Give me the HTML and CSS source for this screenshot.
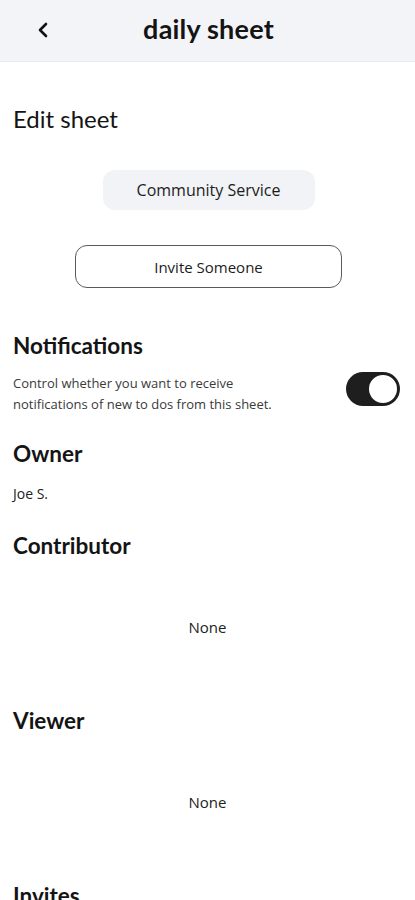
FILE: index.html
```html
<!DOCTYPE html>
<html lang="en">
<head>
    <meta charset="UTF-8">
    <meta name="viewport" content="width=device-width, initial-scale=1.0">
    <title>daily sheet</title>
    <link rel="stylesheet" href="styles.css">
</head>
<body>
    <header class="topbar">
        <button class="back" aria-label="Back">
            <svg width="14" height="16" viewBox="0 0 14 16"><path d="M10 2 L4 8 L10 14" fill="none" stroke="#111" stroke-width="2.6" stroke-linecap="round" stroke-linejoin="round"/></svg>
        </button>
        <h1>daily sheet</h1>
    </header>

    <main class="content">
        <h2 class="page-title">Edit sheet</h2>

        <div class="pill-row">
            <span class="pill">Community Service</span>
        </div>

        <div class="invite-row">
            <button class="invite">Invite Someone</button>
        </div>

        <section class="section">
            <h3>Notifications</h3>
            <div class="notify-row">
                <p class="hint">Control whether you want to receive notifications of new to dos from this sheet.</p>
                <label class="toggle">
                    <input type="checkbox" checked>
                    <span class="track"><span class="knob"></span></span>
                </label>
            </div>
        </section>

        <section class="section owner">
            <h3>Owner</h3>
            <p class="person">Joe S.</p>
        </section>

        <section class="section list">
            <h3>Contributor</h3>
            <div class="empty">None</div>
        </section>

        <section class="section list">
            <h3>Viewer</h3>
            <div class="empty">None</div>
        </section>

        <section class="section list">
            <h3>Invites</h3>
            <div class="empty">None</div>
        </section>
    </main>
</body>
</html>
```

FILE: styles.css
```css
:root {
    --ink: #141414;
    --muted: #3a3a3a;
    --bar: #f3f4f8;
}

* {
    box-sizing: border-box;
}

body {
    margin: 0;
    font-family: 'Open Sans', 'Noto Sans', sans-serif;
    color: var(--ink);
    background: #fff;
}

.topbar {
    height: 62px;
    background: var(--bar);
    border-bottom: 1px solid #e7e9ee;
    display: flex;
    align-items: center;
    justify-content: center;
    position: relative;
}

.back {
    position: absolute;
    left: 34px;
    top: 20px;
    background: none;
    border: none;
    padding: 2px;
    cursor: pointer;
}

.topbar h1 {
    margin: 0 0 4px;
    padding-left: 2px;
    font-family: 'Lato', sans-serif;
    font-size: 27px;
    font-weight: 700;
    letter-spacing: 0.2px;
}

.content {
    padding: 0 13px;
}

.page-title {
    margin: 43px 0 0;
    font-family: 'Lato', sans-serif;
    font-size: 24px;
    font-weight: 400;
    line-height: 28px;
}

.pill-row,
.invite-row {
    display: flex;
    justify-content: center;
}

.pill-row {
    margin-top: 37px;
    padding-left: 2px;
}

.pill {
    width: 212px;
    height: 40px;
    display: flex;
    align-items: center;
    justify-content: center;
    background: #f1f3f6;
    border-radius: 12px;
    font-size: 16px;
    color: #1c1c1c;
}

.invite-row {
    margin-top: 35px;
    padding-left: 2px;
}

.invite {
    width: 267px;
    height: 43px;
    background: #fff;
    border: 1.5px solid #5a5a5a;
    border-radius: 12px;
    font-family: 'Open Sans', sans-serif;
    font-size: 15px;
    color: #1c1c1c;
    cursor: pointer;
}

.section h3 {
    margin: 0;
    font-family: 'Lato', sans-serif;
    font-size: 22.5px;
    font-weight: 700;
    line-height: 26px;
}

.section:first-of-type {
    margin-top: 45px;
}

.notify-row {
    display: flex;
    align-items: flex-start;
    justify-content: space-between;
    margin-top: 14px;
}

.hint {
    margin: 0;
    max-width: 300px;
    padding-right: 30px;
    font-size: 13px;
    line-height: 21px;
    color: var(--muted);
}

.toggle {
    margin: -1px 2px 0 0;
    cursor: pointer;
}

.toggle input {
    display: none;
}

.track {
    display: block;
    width: 54px;
    height: 34px;
    border-radius: 17px;
    background: #1e1e1e;
    position: relative;
}

.knob {
    position: absolute;
    right: 1px;
    top: 1px;
    width: 32px;
    height: 32px;
    border-radius: 50%;
    background: #fff;
    border: 2px solid #1e1e1e;
}

.owner {
    margin-top: 26px;
}

.person {
    margin: 17px 0 0;
    font-size: 14px;
    line-height: 20px;
    color: #222;
}

.owner + .list {
    margin-top: 29px;
}

.empty {
    padding: 58px 0 71px;
    text-align: center;
    font-size: 15px;
    line-height: 20px;
    color: #222;
}
```
